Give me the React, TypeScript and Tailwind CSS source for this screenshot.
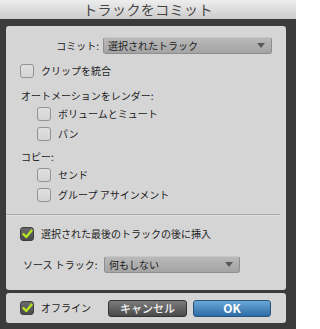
import React from 'react';

const font = { fontFamily: '"Noto Sans CJK JP", "Noto Sans", sans-serif' };

const Check: React.FC<{ checked?: boolean }> = ({ checked }) =>
  checked ? (
    <span className="flex h-[14px] w-[14px] shrink-0 items-center justify-center rounded-[3px] border border-[#3e3e3e] bg-gradient-to-b from-[#6a6a6a] to-[#4c4c4c]">
      <svg width="11" height="10" viewBox="0 0 11 10">
        <path d="M1.5 5.2 L4.3 8 L9.6 1.6" fill="none" stroke="#b6e522" strokeWidth="2.4" strokeLinecap="round" strokeLinejoin="round" />
      </svg>
    </span>
  ) : (
    <span className="block h-[14px] w-[14px] shrink-0 rounded-[3px] border border-[#939393] bg-gradient-to-b from-[#e0e0e0] to-[#d4d4d4]" />
  );

const Select: React.FC<{ value: string; className: string }> = ({ value, className }) => (
  <div
    className={`flex items-center justify-between rounded-[3px] border border-[#8e8e8e] border-t-[#c6c6c6] bg-gradient-to-b from-[#b9b9b9] to-[#a4a4a4] pl-[4px] pr-[6px] text-[10px] text-[#1c1c1c] ${className}`}
  >
    <span>{value}</span>
    <svg width="8" height="5" viewBox="0 0 8 5">
      <path d="M0 0 H8 L4 5 Z" fill="#585858" />
    </svg>
  </div>
);

const Row: React.FC<{ label: string; checked?: boolean; className: string }> = ({ label, checked, className }) => (
  <div className={`flex h-[13px] items-center gap-[7px] ${className}`}>
    <Check checked={checked} />
    <span className="text-[10px] leading-none text-[#1c1c1c]">{label}</span>
  </div>
);

export default function App() {
  return (
    <div className="flex h-[329px] w-[296px] flex-col bg-[#3b3b3b]" style={font}>
      <div className="flex h-[19px] shrink-0 items-center justify-center bg-gradient-to-b from-[#eeeeee] to-[#cbcbcb] text-[14px] tracking-[0.4px] text-[#454545]">
        トラックをコミット
      </div>
      <div className="flex flex-1 flex-col pb-[6px] pl-[6px] pr-[10px] pt-[7px]">
        <div className="flex h-[264px] flex-col rounded-[3px] bg-[#d5d5d5]">
          <div className="mt-[11px] flex h-[17px] items-center">
            <span className="w-[93px] text-right text-[10px] text-[#1c1c1c]">コミット:</span>
            <Select value="選択されたトラック" className="ml-[4px] h-[17px] w-[169px]" />
          </div>
          <Row label="クリップを統合" className="ml-[14px] mt-[10px]" />
          <div className="ml-[15px] mt-[11px] flex h-[14px] items-center text-[10px] text-[#1c1c1c]">
            オートメーションをレンダー:
          </div>
          <Row label="ボリュームとミュート" className="ml-[31px] mt-[5px]" />
          <Row label="パン" className="ml-[31px] mt-[7px]" />
          <div className="ml-[15px] mt-[9px] flex h-[14px] items-center text-[10px] text-[#1c1c1c]">コピー:</div>
          <Row label="センド" className="ml-[31px] mt-[5px]" />
          <Row label="グループ アサインメント" className="ml-[31px] mt-[7px]" />
          <div className="mr-[6px] mt-[13px] h-px bg-[#a9a9a9]" />
          <div className="mr-[6px] h-px bg-[#e2e2e2]" />
          <Row label="選択された最後のトラックの後に挿入" checked className="ml-[14px] mt-[11px]" />
          <div className="mt-[16px] flex h-[17px] items-center">
            <span className="ml-[17px] w-[80px] text-[10px] text-[#1c1c1c]">ソース トラック:</span>
            <Select value="何もしない" className="ml-[1px] h-[17px] w-[136px]" />
          </div>
        </div>
        <div className="mt-[3px] flex h-[30px] items-center rounded-[3px] bg-[#d5d5d5]">
          <Row label="オフライン" checked className="ml-[14px]" />
          <button className="ml-[17px] flex h-[17px] w-[79px] items-center justify-center rounded-[3px] border border-[#333333] bg-gradient-to-b from-[#7c7c7c] to-[#4a4a4a] text-[11px] font-medium text-[#f2f2f2]">
            キャンセル
          </button>
          <button className="ml-[6px] flex h-[17px] w-[78px] items-center justify-center rounded-[3px] border border-[#27557e] bg-gradient-to-b from-[#6aa8d8] to-[#2c6ca6] text-[12px] font-semibold text-white">
            OK
          </button>
        </div>
      </div>
    </div>
  );
}
